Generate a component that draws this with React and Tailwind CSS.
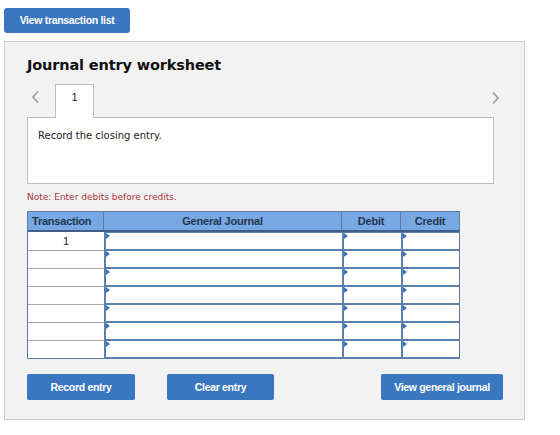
const ROWS = ["1", "", "", "", "", "", ""];

function Marker() {
    return (
        <span className="absolute left-0 top-0 w-0 h-0 border-y-[3px] border-y-transparent border-l-[4px] border-l-[#3b73b9]" />
    );
}

function InputCell({ className = "" }) {
    return (
        <div className={`relative bg-white border-[#5b80ad] border-y border-l-2 ${className}`}>
            <Marker />
        </div>
    );
}

export default function App() {
    const sans = { fontFamily: '"Liberation Sans", Arial, sans-serif' };
    return (
        <div className="w-[560px] h-[435px] bg-white pt-[7px] pl-[4px]" style={{ fontFamily: '"DejaVu Sans", Verdana, sans-serif' }}>
            <button
                className="h-[25px] w-[126px] rounded-[3px] bg-[#3b77c1] text-white text-[10.5px] font-bold tracking-[-0.03em] cursor-pointer"
                style={sans}
            >
                View transaction list
            </button>

            <div className="mt-[8px] w-[521px] h-[379px] bg-[#f2f2f2] border border-[#cccccc] pl-[22px] pr-[31px]">
                <h2 className="mt-[13px] text-[14.5px] leading-[20px] font-bold text-[#111] tracking-[-0.01em]">
                    Journal entry worksheet
                </h2>

                <div className="mt-[10px] flex items-end h-[33px] relative">
                    <span className="absolute left-[4px] top-[5px]">
                        <svg width="9" height="14" viewBox="0 0 9 14"><path d="M7 1.5 L2 7 L7 12.5" fill="none" stroke="#9a9a9a" strokeWidth="1.6" /></svg>
                    </span>
                    <div className="ml-[28px] w-[39px] h-[34px] bg-white border border-b-0 border-[#bdbdbd] flex justify-center pt-[4px] text-[11px] text-[#222] relative z-10" style={sans}>
                        1
                    </div>
                    <span className="absolute right-[-7px] top-[6px]">
                        <svg width="9" height="14" viewBox="0 0 9 14"><path d="M2 1.5 L7 7 L2 12.5" fill="none" stroke="#9a9a9a" strokeWidth="1.6" /></svg>
                    </span>
                </div>
                <div className="-mt-px w-[467px] h-[67px] bg-white border border-[#bdbdbd] pl-[10px] pt-[10px] text-[10px] text-[#222]">
                    Record the closing entry.
                </div>

                <p className="mt-[7px] text-[9px] leading-[12px] text-[#a8343b]">
                    Note: Enter debits before credits.
                </p>

                <div className="mt-[8px] w-[433px] border border-[#5b7ba4]" style={sans}>
                    <div className="grid grid-cols-[76px_238px_59px_58px] h-[20px] bg-[#78a8e4] border-b-2 border-[#3f5f88] text-[11px] font-bold text-[#24364d] tracking-[-0.02em]">
                        <div className="flex items-center pl-[4px] border-r border-[#5b7ba4]">Transaction</div>
                        <div className="flex items-center justify-center border-r border-[#5b7ba4]">General Journal</div>
                        <div className="flex items-center justify-center border-r border-[#5b7ba4]">Debit</div>
                        <div className="flex items-center justify-center">Credit</div>
                    </div>
                    {ROWS.map((t, i) => (
                        <div key={i} className="grid grid-cols-[76px_238px_59px_58px] h-[18px]">
                            <div className={`bg-white flex items-center justify-center text-[11px] text-[#222] border-[#a9a9a9] ${i > 0 ? "border-t" : ""}`}>
                                {t}
                            </div>
                            <InputCell />
                            <InputCell />
                            <InputCell className="border-r-0" />
                        </div>
                    ))}
                </div>

                <div className="mt-[15px] flex items-center">
                    <button className="h-[26px] w-[108px] rounded-[2px] bg-[#3b77c1] text-white text-[10.5px] font-bold tracking-[-0.03em]" style={sans}>
                        Record entry
                    </button>
                    <button className="ml-[32px] h-[26px] w-[107px] rounded-[2px] bg-[#3b77c1] text-white text-[10.5px] font-bold tracking-[-0.03em]" style={sans}>
                        Clear entry
                    </button>
                    <button className="ml-auto mr-[-10px] h-[26px] w-[122px] rounded-[2px] bg-[#3b77c1] text-white text-[10.5px] font-bold tracking-[-0.03em]" style={sans}>
                        View general journal
                    </button>
                </div>
            </div>
        </div>
    );
}
